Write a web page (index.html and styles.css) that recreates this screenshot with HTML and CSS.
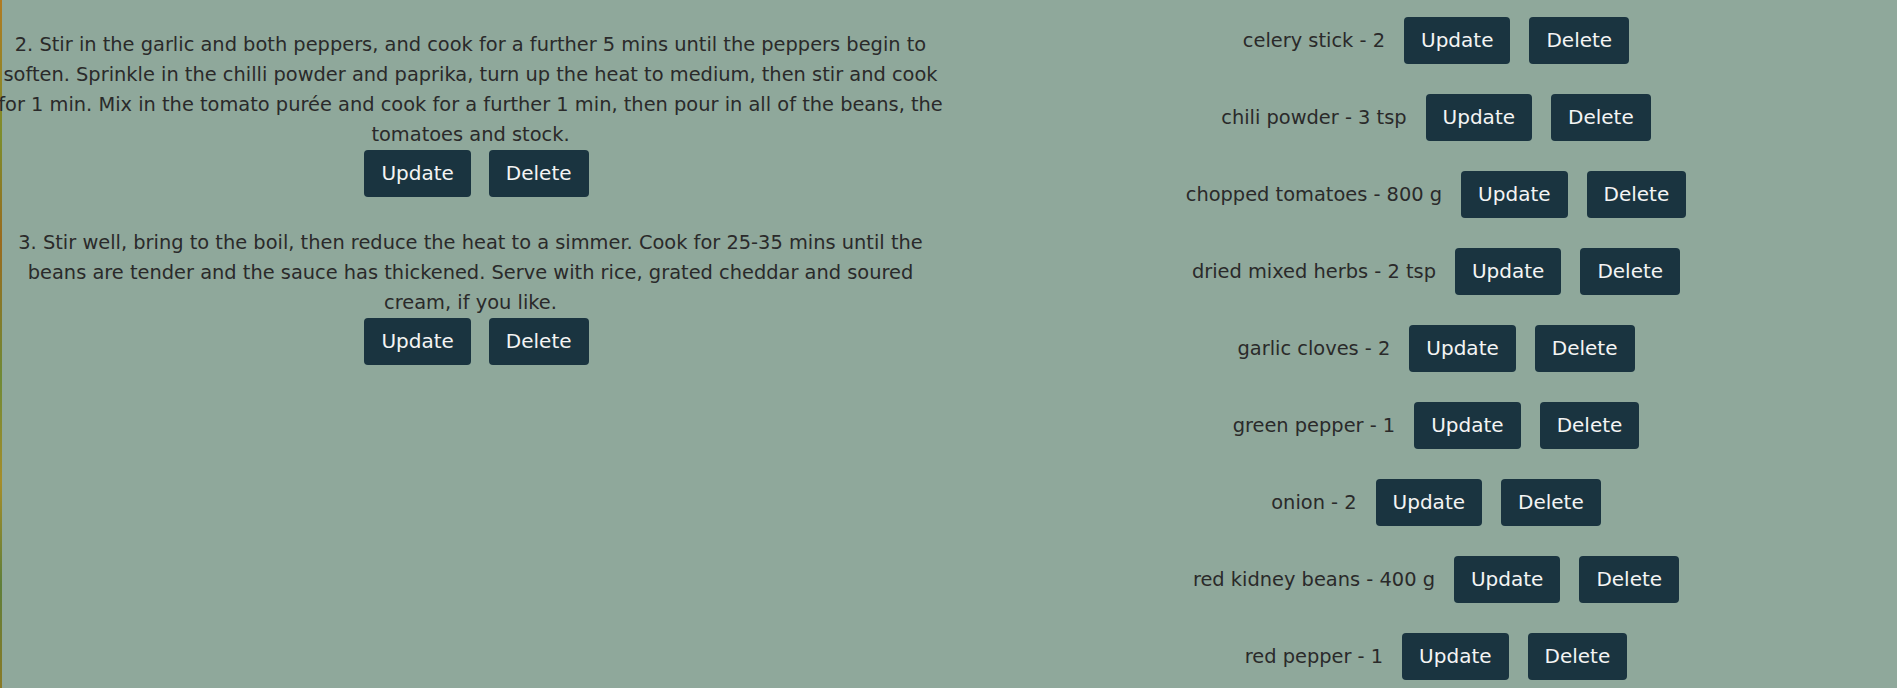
FILE: index.html
```html
<!DOCTYPE html>
<html lang="en">
<head>
<meta charset="utf-8">
<title>Recipe</title>
<link rel="stylesheet" href="styles.css">
</head>
<body>
<div class="edge"></div>
<main class="page">
  <section class="steps">
    <div class="step">
      <p class="step-text">2. Stir in the garlic and both peppers, and cook for a further 5 mins until the peppers begin to soften. Sprinkle in the chilli powder and paprika, turn up the heat to medium, then stir and cook for 1 min. Mix in the tomato purée and cook for a further 1 min, then pour in all of the beans, the tomatoes and stock.</p>
      <div class="actions"><button class="btn">Update</button><button class="btn">Delete</button></div>
    </div>
    <div class="step">
      <p class="step-text">3. Stir well, bring to the boil, then reduce the heat to a simmer. Cook for 25-35 mins until the beans are tender and the sauce has thickened. Serve with rice, grated cheddar and soured cream, if you like.</p>
      <div class="actions"><button class="btn">Update</button><button class="btn">Delete</button></div>
    </div>
  </section>
  <section class="ingredients">
    <div class="ing"><span class="ing-text">celery stick - 2</span><button class="btn">Update</button><button class="btn">Delete</button></div>
    <div class="ing"><span class="ing-text">chili powder - 3 tsp</span><button class="btn">Update</button><button class="btn">Delete</button></div>
    <div class="ing"><span class="ing-text">chopped tomatoes - 800 g</span><button class="btn">Update</button><button class="btn">Delete</button></div>
    <div class="ing"><span class="ing-text">dried mixed herbs - 2 tsp</span><button class="btn">Update</button><button class="btn">Delete</button></div>
    <div class="ing"><span class="ing-text">garlic cloves - 2</span><button class="btn">Update</button><button class="btn">Delete</button></div>
    <div class="ing"><span class="ing-text">green pepper - 1</span><button class="btn">Update</button><button class="btn">Delete</button></div>
    <div class="ing"><span class="ing-text">onion - 2</span><button class="btn">Update</button><button class="btn">Delete</button></div>
    <div class="ing"><span class="ing-text">red kidney beans - 400 g</span><button class="btn">Update</button><button class="btn">Delete</button></div>
    <div class="ing"><span class="ing-text">red pepper - 1</span><button class="btn">Update</button><button class="btn">Delete</button></div>
  </section>
</main>
</body>
</html>
```
FILE: styles.css
```css
html, body {
  margin: 0;
  padding: 0;
  height: 688px;
  overflow: hidden;
}
body {
  background: #8fa89b;
  color: #2a2a2a;
  font-family: "DejaVu Sans", sans-serif;
  font-weight: 400;
  font-size: 19.4px;
  display: flex;
}
.edge {
  width: 2px;
  flex: none;
  background: linear-gradient(180deg, #b07a22 0%, #7c8d2c 20%, #9a6a1e 35%, #6f8a36 55%, #a58d2a 70%, #5f7f3a 85%, #8a7a26 100%);
}
.page {
  flex: 1;
  display: grid;
  grid-template-columns: 937px 1fr;
}
.steps {
  padding-top: 30px;
  display: flex;
  flex-direction: column;
  gap: 31px;
}
.step-text {
  margin: 0 -6px;
  text-align: center;
  line-height: 30px;
}
.actions {
  display: flex;
  justify-content: center;
  gap: 6px;
}
.btn {
  margin-left: 12px;
  font-family: "DejaVu Sans", sans-serif;
  font-weight: 400;
  font-size: 20px;
  line-height: 29px;
  padding: 9px 17px;
  color: #f4f4f4;
  background: #1a3440;
  border: none;
  border-radius: 4px;
}
.ingredients {
  padding-top: 17px;
  padding-left: 36px;
  display: flex;
  flex-direction: column;
  gap: 30px;
}
.ing {
  display: flex;
  align-items: center;
  justify-content: center;
  gap: 7px;
}
.ing-text {
  line-height: 30px;
}
```
